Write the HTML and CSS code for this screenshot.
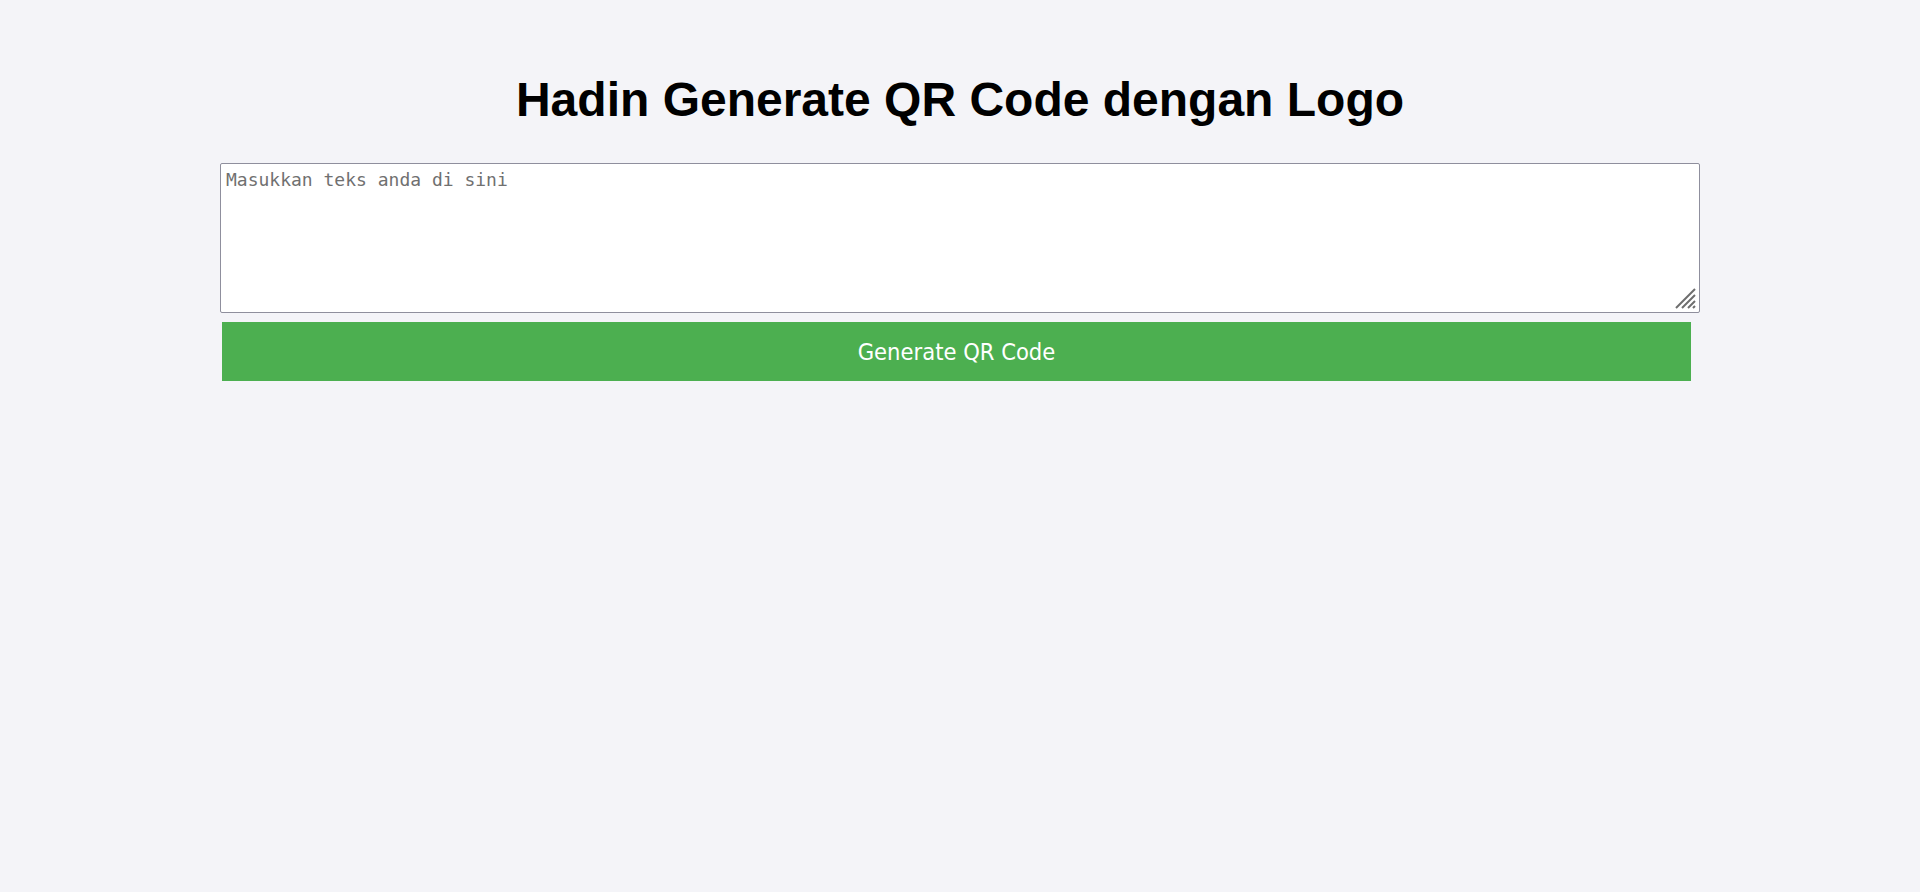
FILE: index.html
```html
<!DOCTYPE html>
<html lang="id">
<head>
<meta charset="utf-8">
<title>Hadin Generate QR Code dengan Logo</title>
<link rel="stylesheet" href="styles.css">
</head>
<body>
<main class="container">
  <h1 class="title">Hadin Generate QR Code dengan Logo</h1>
  <div class="field">
    <textarea class="input" placeholder="Masukkan teks anda di sini"></textarea>
    <svg class="grip" width="21" height="21" viewBox="0 0 21 21" aria-hidden="true">
      <path d="M20 1 L1 20 M20 7 L7 20 M20 13 L13 20 M20 18 L18 20" stroke="#6e6e6e" stroke-width="2" fill="none"/>
    </svg>
  </div>
  <button class="btn" type="button">Generate QR Code</button>
</main>
</body>
</html>
```
FILE: styles.css
```css
html, body {
  margin: 0;
  padding: 0;
  background: #f4f4f8;
}
body {
  font-family: "Liberation Sans", Arial, sans-serif;
}
.container {
  width: 1480px;
  margin: 0 auto;
  display: flex;
  flex-direction: column;
  align-items: flex-start;
}
.title {
  align-self: stretch;
  text-align: center;
  font-size: 48px;
  font-weight: bold;
  margin: 72px 0 0;
  line-height: 56px;
  height: 91px;
  color: #000;
}
.field {
  position: relative;
  width: 1480px;
  height: 150px;
}
.input {
  display: block;
  box-sizing: border-box;
  width: 1480px;
  height: 150px;
  margin: 0;
  padding: 5px;
  border: 1px solid #8f8f9d;
  border-radius: 2px;
  background: #fff;
  font-family: "DejaVu Sans Mono", "Liberation Mono", monospace;
  font-size: 18px;
  line-height: 22px;
  resize: none;
}
.input::placeholder {
  color: #707070;
}
.grip {
  position: absolute;
  right: 4px;
  bottom: 4px;
  pointer-events: none;
}
.btn {
  margin: 9px 0 0 2px;
  width: 1469px;
  height: 59px;
  border: none;
  background: #4caf50;
  color: #fff;
  font-family: "DejaVu Sans Condensed", "DejaVu Sans", sans-serif;
  font-size: 23.5px;
  padding: 0;
  cursor: pointer;
}
```
